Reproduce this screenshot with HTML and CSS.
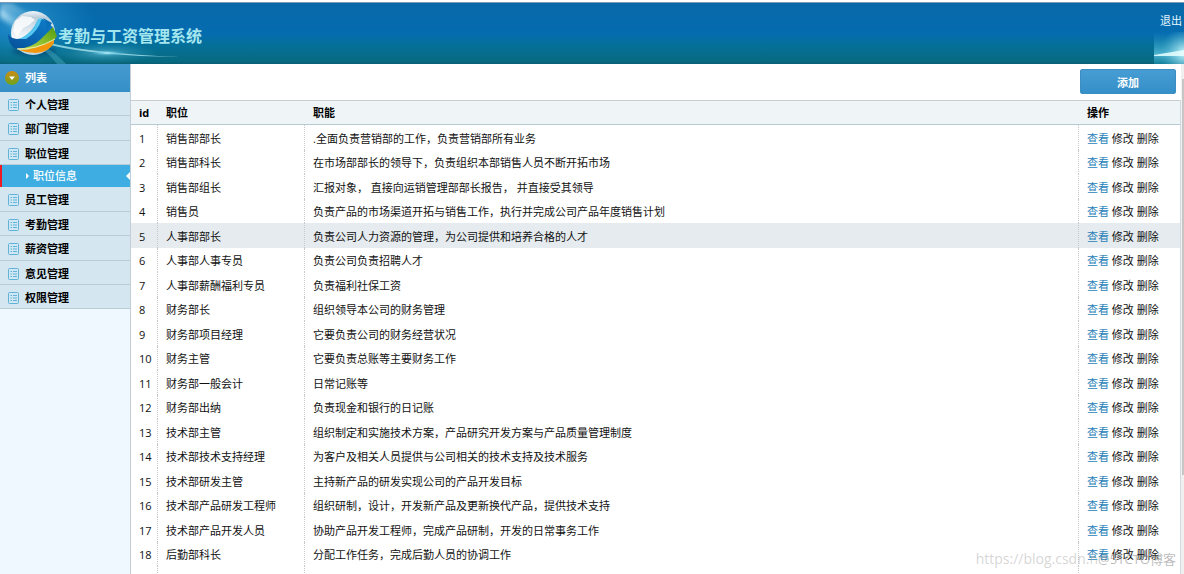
FILE: index.html
```html
<!DOCTYPE html>
<html lang="zh-CN">
<head>
<meta charset="utf-8">
<title>考勤与工资管理系统</title>
<link rel="stylesheet" href="styles.css">
</head>
<body>
<header class="topbar">
  <svg class="topbar-art" width="260" height="61" viewBox="0 0 260 61" aria-hidden="true">
    <defs>
      <radialGradient id="glow"><stop offset="0" stop-color="#e8ffff"/><stop offset=".25" stop-color="#7fd6ec" stop-opacity=".7"/><stop offset="1" stop-color="#2a9cc8" stop-opacity="0"/></radialGradient>
      <radialGradient id="haze"><stop offset="0" stop-color="#3fa9dc" stop-opacity=".6"/><stop offset="1" stop-color="#2a9cd8" stop-opacity="0"/></radialGradient>
      <linearGradient id="beam" x1="0" y1="0" x2="1" y2="1"><stop offset="0" stop-color="#d8f2ff" stop-opacity=".9"/><stop offset="1" stop-color="#58b4dc" stop-opacity=".1"/></linearGradient>
      <linearGradient id="silver" x1="0" y1="0" x2="0" y2="1"><stop offset="0" stop-color="#f2f7fa"/><stop offset=".15" stop-color="#b9cdda"/><stop offset=".6" stop-color="#f4f9fc"/><stop offset="1" stop-color="#bcd3e2"/></linearGradient>
      <linearGradient id="blue" x1="1" y1="0" x2="0" y2="1"><stop offset="0" stop-color="#0f80cc"/><stop offset="1" stop-color="#07509a"/></linearGradient>
      <linearGradient id="green" x1="0" y1="1" x2="1" y2="0"><stop offset="0" stop-color="#c9e04a"/><stop offset="1" stop-color="#4c9b10"/></linearGradient>
      <filter id="soft" x="-20%" y="-20%" width="140%" height="140%"><feGaussianBlur stdDeviation="2"/></filter>
    </defs>
    <ellipse cx="20" cy="18" rx="75" ry="45" fill="url(#haze)"/>
    <g filter="url(#soft)">
      <path d="M0 0H12L38 16L20 28L0 16Z" fill="url(#beam)" opacity=".6"/>
      <path d="M0 6L24 22L18 28L0 13Z" fill="url(#beam)"/>
      <ellipse cx="34" cy="48" rx="22" ry="5" fill="#033f6d" opacity=".6"/>
    </g>
    <path d="M40 44Q52 54 57 61H66Q56 50 44 43Z" fill="#4fb3c8" opacity=".4"/>
    <ellipse cx="106" cy="50" rx="54" ry="11" fill="url(#glow)" opacity=".5"/>
    <path d="M50 40Q90 50 180 54Q95 53 50 42Z" fill="#b9f1f6" opacity=".7"/>
    <ellipse cx="107" cy="50" rx="18" ry="3" fill="url(#glow)"/>
    <circle cx="33" cy="30" r="22" fill="url(#silver)"/>
    <path d="M13 28L15 18L22 13L31 14L35 17L29 22L23 25L17 34Z" fill="#fff" opacity=".8"/>
    <path d="M8 31Q13 38 22 35Q32 30 38 17L43 16L50 22L53 24Q48 36 36 42Q26 47 14 45Q8 40 8 31Z" fill="url(#blue)"/>
    <path d="M19 36Q33 30 38 16L42 15Q38 29 26 36Z" fill="#55c6ef"/>
    <path d="M43 15L52 20L46 30Q48 22 43 15Z" fill="#0a6fb9"/>
    <path d="M17 46Q32 45 41 36Q48 29 53 24L57 33Q53 40 45 43Q31 48 17 46Z" fill="url(#green)"/>
    <path d="M19 47Q36 47 54 37V40Q49 49 36 50Q27 50 19 47Z" fill="#f4960b"/>
    <path d="M17 46Q36 47 55 36" fill="none" stroke="#f4edb0"/>
  </svg>
  <h1 class="brand">考勤与工资管理系统</h1>
  <div class="account">
    <a class="logout" href="#">退出</a>
    <svg class="flare" width="30" height="32" viewBox="0 0 30 32" aria-hidden="true">
      <defs>
        <linearGradient id="flareFade" x1="0" y1="0" x2="0" y2="1"><stop offset="0" stop-color="#2fa0d4" stop-opacity="0"/><stop offset=".7" stop-color="#5fc4e0" stop-opacity=".8"/><stop offset="1" stop-color="#1f93b4" stop-opacity=".6"/></linearGradient>
        <radialGradient id="flareGlow" cx="1" cy=".65" r=".8"><stop offset="0" stop-color="#c9f6fc"/><stop offset="1" stop-color="#45abcf" stop-opacity="0"/></radialGradient>
      </defs>
      <rect width="30" height="32" fill="url(#flareFade)"/>
      <rect width="30" height="32" fill="url(#flareGlow)"/>
      <path d="M0 23L30 18V24L0 24Z" fill="#e8ffff" opacity=".85"/>
    </svg>
  </div>
</header>
<div class="layout">
  <nav class="sidebar" aria-label="列表">
    <h2 class="menu-title">
      <svg width="14" height="14" viewBox="0 0 14 14" aria-hidden="true"><defs><linearGradient id="gold" x1="0" y1="0" x2="0" y2="1"><stop offset="0" stop-color="#d08a16"/><stop offset="1" stop-color="#6ba51c"/></linearGradient></defs><circle cx="7" cy="7" r="7" fill="url(#gold)"/><path d="M4 5.500H10L7 9Z" fill="#fff"/></svg>列表</h2>
    <svg class="sprite" aria-hidden="true"><symbol id="list" viewBox="0 0 11 12"><rect x=".5" y=".5" width="10" height="11" rx="1" fill="#cfe8f4" stroke="#61b1d8"/><path d="M2.500 3.500H4M5 3.500H9M2.500 6H4M5 6H9M2.500 8.500H4M5 8.500H9" stroke="#61b1d8"/></symbol></svg>
    <a class="item" href="#"><svg class="ico"><use href="#list"/></svg>个人管理</a>
    <a class="item tall" href="#"><svg class="ico"><use href="#list"/></svg>部门管理</a>
    <a class="item" href="#"><svg class="ico"><use href="#list"/></svg>职位管理</a>
    <a class="subitem" href="#" aria-current="page"><svg width="3" height="6" viewBox="0 0 3 6" aria-hidden="true"><path d="M0 0L3 3L0 6Z" fill="#fff"/></svg>职位信息<svg class="pointer" width="4" height="8" viewBox="0 0 4 8" aria-hidden="true"><path d="M4 0L0 4L4 8Z" fill="#fff"/></svg></a>
    <a class="item tall" href="#"><svg class="ico"><use href="#list"/></svg>员工管理</a>
    <a class="item" href="#"><svg class="ico"><use href="#list"/></svg>考勤管理</a>
    <a class="item tall" href="#"><svg class="ico"><use href="#list"/></svg>薪资管理</a>
    <a class="item" href="#"><svg class="ico"><use href="#list"/></svg>意见管理</a>
    <a class="item" href="#"><svg class="ico"><use href="#list"/></svg>权限管理</a>
  </nav>
  <main class="content">
    <div class="toolbar"><button class="add" type="button">添加</button></div>
    <table class="grid">
      <colgroup><col class="c-id"><col class="c-name"><col><col class="c-ops"></colgroup>
      <thead><tr><th>id</th><th>职位</th><th>职能</th><th>操作</th></tr></thead>
      <tbody>
        <tr><td>1</td><td>销售部部长</td><td>.全面负责营销部的工作，负责营销部所有业务</td><td><a class="view" href="#">查看</a> <a href="#">修改</a> <a href="#">删除</a></td></tr>
        <tr><td>2</td><td>销售部科长</td><td>在市场部部长的领导下，负责组织本部销售人员不断开拓市场</td><td><a class="view" href="#">查看</a> <a href="#">修改</a> <a href="#">删除</a></td></tr>
        <tr><td>3</td><td>销售部组长</td><td>汇报对象， 直接向运销管理部部长报告， 并直接受其领导</td><td><a class="view" href="#">查看</a> <a href="#">修改</a> <a href="#">删除</a></td></tr>
        <tr><td>4</td><td>销售员</td><td>负责产品的市场渠道开拓与销售工作，执行并完成公司产品年度销售计划</td><td><a class="view" href="#">查看</a> <a href="#">修改</a> <a href="#">删除</a></td></tr>
        <tr class="active"><td>5</td><td>人事部部长</td><td>负责公司人力资源的管理，为公司提供和培养合格的人才</td><td><a class="view" href="#">查看</a> <a href="#">修改</a> <a href="#">删除</a></td></tr>
        <tr><td>6</td><td>人事部人事专员</td><td>负责公司负责招聘人才</td><td><a class="view" href="#">查看</a> <a href="#">修改</a> <a href="#">删除</a></td></tr>
        <tr><td>7</td><td>人事部薪酬福利专员</td><td>负责福利社保工资</td><td><a class="view" href="#">查看</a> <a href="#">修改</a> <a href="#">删除</a></td></tr>
        <tr><td>8</td><td>财务部长</td><td>组织领导本公司的财务管理</td><td><a class="view" href="#">查看</a> <a href="#">修改</a> <a href="#">删除</a></td></tr>
        <tr><td>9</td><td>财务部项目经理</td><td>它要负责公司的财务经营状况</td><td><a class="view" href="#">查看</a> <a href="#">修改</a> <a href="#">删除</a></td></tr>
        <tr><td>10</td><td>财务主管</td><td>它要负责总账等主要财务工作</td><td><a class="view" href="#">查看</a> <a href="#">修改</a> <a href="#">删除</a></td></tr>
        <tr><td>11</td><td>财务部一般会计</td><td>日常记账等</td><td><a class="view" href="#">查看</a> <a href="#">修改</a> <a href="#">删除</a></td></tr>
        <tr><td>12</td><td>财务部出纳</td><td>负责现金和银行的日记账</td><td><a class="view" href="#">查看</a> <a href="#">修改</a> <a href="#">删除</a></td></tr>
        <tr><td>13</td><td>技术部主管</td><td>组织制定和实施技术方案，产品研究开发方案与产品质量管理制度</td><td><a class="view" href="#">查看</a> <a href="#">修改</a> <a href="#">删除</a></td></tr>
        <tr><td>14</td><td>技术部技术支持经理</td><td>为客户及相关人员提供与公司相关的技术支持及技术服务</td><td><a class="view" href="#">查看</a> <a href="#">修改</a> <a href="#">删除</a></td></tr>
        <tr><td>15</td><td>技术部研发主管</td><td>主持新产品的研发实现公司的产品开发目标</td><td><a class="view" href="#">查看</a> <a href="#">修改</a> <a href="#">删除</a></td></tr>
        <tr><td>16</td><td>技术部产品研发工程师</td><td>组织研制，设计，开发新产品及更新换代产品，提供技术支持</td><td><a class="view" href="#">查看</a> <a href="#">修改</a> <a href="#">删除</a></td></tr>
        <tr><td>17</td><td>技术部产品开发人员</td><td>协助产品开发工程师，完成产品研制，开发的日常事务工作</td><td><a class="view" href="#">查看</a> <a href="#">修改</a> <a href="#">删除</a></td></tr>
        <tr><td>18</td><td>后勤部科长</td><td>分配工作任务，完成后勤人员的协调工作</td><td><a class="view" href="#">查看</a> <a href="#">修改</a> <a href="#">删除</a></td></tr>
        <tr><td></td><td></td><td></td><td></td></tr>
      </tbody>
    </table>
  </main>
  <div class="scroll" aria-hidden="true"><div class="thumb"></div></div>
</div>
<div class="watermark"><span class="wm-url">https://blog.csdn.n</span><span class="wm-site">@51CTO博客</span></div>
</body>
</html>
```
FILE: styles.css
```css
* { box-sizing: border-box; }
body {
  margin: 0;
  height: 100vh;
  overflow: hidden;
  display: flex;
  flex-direction: column;
  padding-top: 2px;
  background: #fff;
  color: #111;
  font: 11px/16px "Open Sans", "Noto Sans CJK SC", sans-serif;
}
a { color: inherit; text-decoration: none; }
.topbar {
  position: relative;
  flex: none;
  display: flex;
  justify-content: space-between;
  height: 62px;
  border-top: 1px solid #7f9bb5;
  background: linear-gradient(#0869a8, #056cb0 50%, #04709a 68%, #076a80 96%, #0a5f74);
}
.topbar-art { position: absolute; left: 0; top: 0; }
.brand {
  position: relative;
  margin: 0;
  padding: 20px 0 0 58px;
  font: bold 16px/24px "Noto Sans CJK SC", sans-serif;
  color: #a3e6ee;
}
.account {
  display: flex;
  flex-direction: column;
  align-items: flex-end;
  justify-content: space-between;
}
.logout { padding: 10px 2px 0 0; color: #e8f6ff; }
.flare { display: block; }
.layout { flex: 1; min-height: 0; display: flex; }
.sidebar {
  flex: none;
  width: 131px;
  border-right: 1px solid #c3ced6;
  background: #f0f8ff;
}
.sprite { position: absolute; width: 0; height: 0; }
.menu-title {
  display: flex;
  align-items: center;
  gap: 6px;
  height: 28px;
  margin: 0;
  padding-left: 5px;
  background: linear-gradient(#459bd0, #358fc7);
  color: #fff;
  font-size: 11px;
}
.item {
  display: flex;
  align-items: center;
  gap: 6px;
  height: 24px;
  padding: 2px 0 0 8px;
  border-bottom: 1px solid #b9cdd7;
  background: #d4e7f0;
  color: #000;
  font-weight: bold;
}
.tall { height: 25px; }
.ico { width: 11px; height: 12px; }
.subitem {
  display: flex;
  align-items: center;
  gap: 4px;
  height: 22px;
  padding-left: 24px;
  border-left: 2px solid #ee1c25;
  background: #3eaee2;
  color: #fff;
  font-weight: 500;
}
.pointer { margin-left: auto; }
.content { flex: 1; min-width: 0; overflow: hidden; }
.toolbar {
  display: flex;
  justify-content: flex-end;
  padding: 5px 5px 6px 0;
}
.add {
  width: 96px;
  height: 25px;
  padding: 0;
  border: 1px solid #3c8dc1;
  border-radius: 2px;
  background: linear-gradient(#479dd3, #358fc8);
  color: #fff;
  font: bold 11px/16px "Noto Sans CJK SC", sans-serif;
}
.grid {
  width: 100%;
  table-layout: fixed;
  border-collapse: separate;
  border-spacing: 0;
  border-right: 1px solid #d0dae0;
}
.c-id { width: 27px; }
.c-name { width: 147px; }
.c-ops { width: 101px; }
.grid th, .grid td { padding: 0 0 0 8px; text-align: left; white-space: nowrap; }
.grid th {
  height: 25px;
  border-top: 1px solid #c7cdd1;
  border-bottom: 1px solid #b5cbd5;
  background: #eff4f7;
  color: #000;
}
.grid td { height: 25px; padding-top: 2px; border-right: 1px dotted #c5c9cc; }
.grid td:last-child { border-right: 0; }
.grid tr:nth-child(even) td { height: 24px; }
.active td { background: #e5ebee; }
.view { color: #2a7fb8; }
.scroll { flex: none; width: 3px; background: #f0f0f0; padding: 15px 0 0 1px; }
.thumb { height: 396px; background: #c6c6c6; }
.watermark {
  position: absolute;
  right: 8px;
  bottom: 6px;
  display: flex;
  font: 13px/18px "Open Sans", "Noto Sans CJK SC", sans-serif;
  pointer-events: none;
}
.wm-url { font-size: 14px; color: rgba(150, 150, 150, .4); }
.wm-site { color: rgba(120, 120, 120, .5); }
```
